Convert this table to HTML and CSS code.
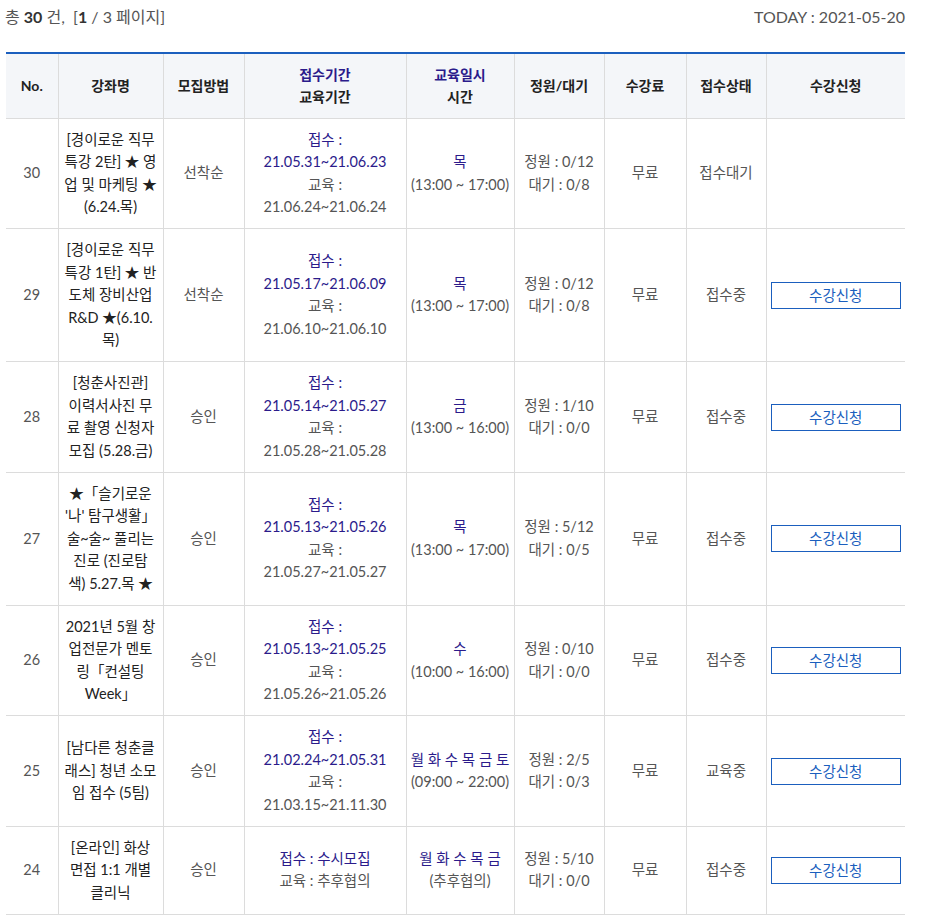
FILE: index.html
```html
<!DOCTYPE html>
<html lang="ko">
<head>
<meta charset="utf-8">
<title>강좌 목록</title>
<link rel="stylesheet" href="styles.css">
</head>
<body>
<div class="wrap">
  <div class="topbar">
    <div class="total">총 <b>30</b> 건, &nbsp;[<b>1</b> / 3 페이지]</div>
    <div class="today">TODAY : 2021-05-20</div>
  </div>
  <table class="list">
    <colgroup>
      <col class="c-no"><col class="c-title"><col class="c-method"><col class="c-period"><col class="c-date"><col class="c-cap"><col class="c-fee"><col class="c-status"><col class="c-apply">
    </colgroup>
    <thead>
      <tr>
        <th>No.</th>
        <th>강좌명</th>
        <th>모집방법</th>
        <th><span class="hl">접수기간</span><br>교육기간</th>
        <th><span class="hl">교육일시</span><br>시간</th>
        <th>정원/대기</th>
        <th>수강료</th>
        <th>접수상태</th>
        <th>수강신청</th>
      </tr>
    </thead>
    <tbody>
      <tr>
        <td>30</td>
        <td class="title">[경이로운 직무<br>특강 2탄] ★ 영<br>업 및 마케팅 ★<br>(6.24.목)</td>
        <td>선착순</td>
        <td><span class="hl">접수 :<br>21.05.31~21.06.23</span><br>교육 :<br>21.06.24~21.06.24</td>
        <td><span class="hl">목</span><br>(13:00 ~ 17:00)</td>
        <td>정원 : 0/12<br>대기 : 0/8</td>
        <td>무료</td>
        <td>접수대기</td>
        <td></td>
      </tr>
      <tr>
        <td>29</td>
        <td class="title">[경이로운 직무<br>특강 1탄] ★ 반<br>도체 장비산업<br>R&amp;D ★(6.10.<br>목)</td>
        <td>선착순</td>
        <td><span class="hl">접수 :<br>21.05.17~21.06.09</span><br>교육 :<br>21.06.10~21.06.10</td>
        <td><span class="hl">목</span><br>(13:00 ~ 17:00)</td>
        <td>정원 : 0/12<br>대기 : 0/8</td>
        <td>무료</td>
        <td>접수중</td>
        <td><a class="btn" href="#">수강신청</a></td>
      </tr>
      <tr>
        <td>28</td>
        <td class="title">[청춘사진관]<br>이력서사진 무<br>료 촬영 신청자<br>모집 (5.28.금)</td>
        <td>승인</td>
        <td><span class="hl">접수 :<br>21.05.14~21.05.27</span><br>교육 :<br>21.05.28~21.05.28</td>
        <td><span class="hl">금</span><br>(13:00 ~ 16:00)</td>
        <td>정원 : 1/10<br>대기 : 0/0</td>
        <td>무료</td>
        <td>접수중</td>
        <td><a class="btn" href="#">수강신청</a></td>
      </tr>
      <tr>
        <td>27</td>
        <td class="title">★「슬기로운<br>'나' 탐구생활」<br>술~술~ 풀리는<br>진로 (진로탐<br>색) 5.27.목 ★</td>
        <td>승인</td>
        <td><span class="hl">접수 :<br>21.05.13~21.05.26</span><br>교육 :<br>21.05.27~21.05.27</td>
        <td><span class="hl">목</span><br>(13:00 ~ 17:00)</td>
        <td>정원 : 5/12<br>대기 : 0/5</td>
        <td>무료</td>
        <td>접수중</td>
        <td><a class="btn" href="#">수강신청</a></td>
      </tr>
      <tr>
        <td>26</td>
        <td class="title">2021년 5월 창<br>업전문가 멘토<br>링「컨설팅<br>Week」</td>
        <td>승인</td>
        <td><span class="hl">접수 :<br>21.05.13~21.05.25</span><br>교육 :<br>21.05.26~21.05.26</td>
        <td><span class="hl">수</span><br>(10:00 ~ 16:00)</td>
        <td>정원 : 0/10<br>대기 : 0/0</td>
        <td>무료</td>
        <td>접수중</td>
        <td><a class="btn" href="#">수강신청</a></td>
      </tr>
      <tr>
        <td>25</td>
        <td class="title">[남다른 청춘클<br>래스] 청년 소모<br>임 접수 (5팀)</td>
        <td>승인</td>
        <td><span class="hl">접수 :<br>21.02.24~21.05.31</span><br>교육 :<br>21.03.15~21.11.30</td>
        <td><span class="hl">월 화 수 목 금 토</span><br>(09:00 ~ 22:00)</td>
        <td>정원 : 2/5<br>대기 : 0/3</td>
        <td>무료</td>
        <td>교육중</td>
        <td><a class="btn" href="#">수강신청</a></td>
      </tr>
      <tr>
        <td>24</td>
        <td class="title">[온라인] 화상<br>면접 1:1 개별<br>클리닉</td>
        <td>승인</td>
        <td><span class="hl">접수 : 수시모집</span><br>교육 : 추후협의</td>
        <td><span class="hl">월 화 수 목 금</span><br>(추후협의)</td>
        <td>정원 : 5/10<br>대기 : 0/0</td>
        <td>무료</td>
        <td>접수중</td>
        <td><a class="btn" href="#">수강신청</a></td>
      </tr>
    </tbody>
  </table>
</div>
</body>
</html>
```

FILE: styles.css
```css
html, body {
  margin: 0;
  padding: 0;
  background: #fff;
}

body {
  font-family: Lato, "Noto Sans CJK KR", sans-serif;
  color: #555;
  font-size: 14.5px;
}

.wrap {
  width: 899px;
  padding-left: 6px;
}

.topbar {
  display: flex;
  justify-content: space-between;
  align-items: center;
  height: 32px;
  margin-bottom: 20px;
  font-size: 16px;
  color: #555;
}

.total {
  margin-left: -1px;
}

.total b {
  color: #333;
  font-weight: 700;
}

.list {
  width: 899px;
  border-collapse: collapse;
  table-layout: fixed;
  border-top: 2px solid #1b5fbe;
}

.c-no { width: 52px; }
.c-title { width: 105px; }
.c-method { width: 81px; }
.c-period { width: 162px; }
.c-date { width: 108px; }
.c-cap { width: 90px; }
.c-fee { width: 82px; }
.c-status { width: 80px; }
.c-apply { width: 139px; }

.list th,
.list td {
  border-left: 1px solid #dcdcdc;
  border-bottom: 1px solid #dcdcdc;
  text-align: center;
  vertical-align: middle;
  line-height: 22.5px;
}

.list th:first-child,
.list td:first-child {
  border-left: 0;
}

.list th {
  background: #f4f6f9;
  color: #222;
  font-weight: 700;
  font-size: 14px;
  padding: 9.5px 4px 9px;
}

.list td {
  padding: 10px 3px 9.5px;
}

.list td.title {
  color: #222;
  padding-left: 2px;
  padding-right: 2px;
}

.hl {
  color: #2b1b8b;
}

.btn {
  display: inline-block;
  box-sizing: border-box;
  width: 130px;
  height: 27px;
  line-height: 25px;
  border: 1px solid #1b5fbe;
  color: #1b5fbe;
  text-decoration: none;
  background: #fff;
  vertical-align: middle;
}
```
